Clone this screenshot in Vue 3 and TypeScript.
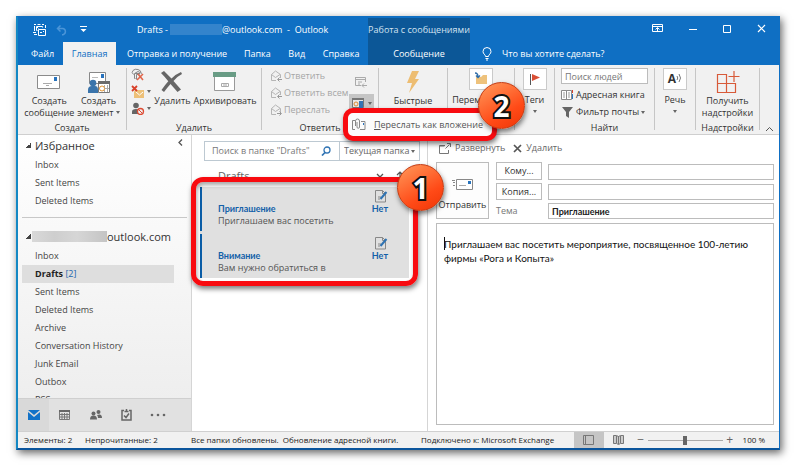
<script setup lang="ts">
import { ref } from 'vue'

interface Tab {
  label: string
  active?: boolean
}
interface Message {
  subject: string
  preview: string
}

const tabs: Tab[] = [
  { label: 'Файл' },
  { label: 'Главная', active: true },
  { label: 'Отправка и получение' },
  { label: 'Папка' },
  { label: 'Вид' },
  { label: 'Справка' },
]
const favorites: string[] = ['Inbox', 'Sent Items', 'Deleted Items']
const folders: string[] = [
  'Inbox', 'Drafts', 'Sent Items', 'Deleted Items', 'Archive',
  'Conversation History', 'Junk Email', 'Outbox', 'RSS-каналы',
]
const messages: Message[] = [
  { subject: 'Приглашение', preview: 'Приглашаем вас посетить' },
  { subject: 'Внимание', preview: 'Вам нужно обратиться в' },
]
const replies: string[] = ['Ответить', 'Ответить всем', 'Переслать']

const peopleQuery = ref('')
const folderQuery = ref('')
const scope = ref('Текущая папка')
const to = ref('')
const cc = ref('')
const subject = ref('Приглашение')
const body = ref('Приглашаем вас посетить мероприятие, посвященное 100-летию фирмы «Рога и Копыта»')
const zoom = ref(100)
</script>

<template>
  <div class="page">
    <div class="window">
      <header class="header">
        <div class="header-main">
          <div class="title-row">
            <div class="quick">
              <button class="bare" aria-label="Отправить и получить">
                <svg width="14" height="14" viewBox="0 0 14 14" fill="none" stroke="#fff">
                  <path d="M1 1.500h2M4.500 1.500h3M9 1.500h2M1.500 3v5M3.500 3.500h6v1M3.500 3.500v4h1M5.500 5.500L4 4M12.500 2v3M5.500 6.500h7v6h-7zM7 9.500h2M10 8.500h1M0 9.500h3M1 11.500h3" />
                </svg>
              </button>
              <button class="bare undo" aria-label="Отменить">
                <svg width="12" height="12" viewBox="0 0 12 12" fill="none" stroke="#4b95d8" stroke-width="1.500">
                  <path d="M4.500 1.500L1.500 4.500l3 3M1.500 4.500H7a3.200 3.200 0 0 1 0 6.200H6" />
                </svg>
              </button>
              <button class="bare" aria-label="Настройка панели">
                <svg width="7" height="7" viewBox="0 0 7 7" fill="#fff"><path d="M0 0h7v1H0zM.5 3h6L3.500 6z" /></svg>
              </button>
            </div>
            <div class="title"><span>Drafts -</span><i class="mask"></i><span>@outlook.com&nbsp; -&nbsp; Outlook</span></div>
          </div>
          <nav class="tabs">
            <button v-for="t in tabs" :key="t.label" class="tab" :class="{ active: t.active }">{{ t.label }}</button>
          </nav>
        </div>
        <div class="context">
          <div class="context-title">Работа с сообщениями</div>
          <button class="tab">Сообщение</button>
        </div>
        <div class="header-side">
          <div class="controls">
            <button class="bare" aria-label="Параметры ленты">
              <svg width="11" height="9" viewBox="0 0 11 9" fill="none" stroke="#fff"><path d="M.5.5h10v7H.5zM.5 2.500h10M5.500 7V4M3.500 5.500l2-2 2 2" /></svg>
            </button>
            <button class="bare" aria-label="Свернуть">
              <svg width="8" height="9" viewBox="0 0 8 9" stroke="#fff"><path d="M0 5.500h8" /></svg>
            </button>
            <button class="bare" aria-label="Развернуть окно">
              <svg width="8" height="9" viewBox="0 0 8 9" fill="none" stroke="#fff"><path d="M.5 1.500h7v7h-7z" /></svg>
            </button>
            <button class="bare" aria-label="Закрыть">
              <svg width="9" height="9" viewBox="0 0 9 9" stroke="#fff" stroke-width="1.200"><path d="M1 1l7 7M8 1L1 8" /></svg>
            </button>
          </div>
          <button class="tell">
            <svg width="10" height="14" viewBox="0 0 10 14" fill="none" stroke="#fff"><path d="M3.500 9.500C3.500 7.500 1 7 1 4.500a4 4 0 0 1 8 0C9 7 6.500 7.500 6.500 9.500zM3.500 11.500h3M4 13h2" /></svg>
            Что вы хотите сделать?
          </button>
        </div>
      </header>

      <section class="ribbon">
        <div class="group create">
          <div class="tools">
            <button class="big">
              <span class="pic"><svg width="24" height="16" viewBox="0 0 24 16"><path d="M.5 1.500h22v13H.5z" fill="#fff" stroke="#8b8b8b" /><path d="M17 3h3v4h-3z" fill="#2873bd" /><path d="M6 9.500h9M9 11.500h3" stroke="#aaa" /></svg></span>
              <span>Создать<br />сообщение</span>
            </button>
            <button class="big">
              <span class="pic"><svg width="24" height="24" viewBox="0 0 24 24"><path d="M2.500 2.500h16v11h-16z" fill="#fff" stroke="#888" /><path d="M14 4h3v4h-3z" fill="#2873bd" /><path d="M5 7.500h6" stroke="#bbb" /><circle cx="6" cy="13" r="3.300" fill="#3a74ab" /><path d="M1 23v-3q0-4 4-4h3q3 0 3 4v3z" fill="#3a74ab" /><path d="M11.500 12.500h11v10h-11z" fill="#fff" stroke="#777" /><path d="M11 11h12v3H11z" fill="#6b6b6b" /><path d="M12 18.500h10M17.500 15v7M20.500 15v7" stroke="#aaa" /><circle cx="15" cy="18.500" r="2.500" fill="#fff" stroke="#e39534" /></svg></span>
              <span>Создать<br />элемент <b class="caret"></b></span>
            </button>
          </div>
          <div class="group-name">Создать</div>
        </div>

        <div class="group delete">
          <div class="tools">
            <div class="mini">
              <button class="bare" aria-label="Игнорировать"><svg width="14" height="13" viewBox="0 0 14 13" fill="none" stroke="#888"><path d="M2.500 6.500Q0 4.500 2 2.500 4 .5 7 1.500t3 3M4.500 10.500H3.500v-5L7 3.500l4 2M4 5.500h5" /><path d="M5.500 11.500v-5h3" /><path d="M7 6l5 6M12 6l-6 6" stroke="#e0664c" stroke-width="1.600" /></svg></button>
              <button class="bare" aria-label="Очистить"><svg width="14" height="13" viewBox="0 0 14 13"><path d="M4 5h9v8H3V7z" fill="#edc078" /><path d="M5 7l3.500 3L12 7" fill="none" stroke="#fff" /><path d="M1 1l5 5M6 1L1 6" stroke="#d8402a" stroke-width="1.800" /></svg><b class="caret"></b></button>
              <button class="bare" aria-label="Нежелательная почта"><svg width="14" height="13" viewBox="0 0 14 13"><circle cx="5" cy="3.500" r="2.800" fill="#666" /><path d="M1 12V9.500Q1 7 5 7t4 2v3z" fill="#666" /><circle cx="9.500" cy="9.500" r="3" fill="#f1f1f1" stroke="#dc4a32" stroke-width="1.300" /><path d="M7.500 7.500l4 4" stroke="#dc4a32" /></svg><b class="caret"></b></button>
            </div>
            <button class="big">
              <span class="pic"><svg width="22" height="22" viewBox="0 0 22 22" fill="#666"><path d="M0 2l3-2q4 4 7.500 7.500Q15 3 20 1l1 2q-5 2.500-8.500 7Q16 14 20 18.500L16.500 21 9.500 13Q6 17 3 21l-2.500-2Q4 14 7.300 10.300 4 6 0 2z" /></svg></span>
              <span>Удалить</span>
            </button>
            <button class="big">
              <span class="pic"><svg width="24" height="20" viewBox="0 0 24 20"><path d="M1.500 4.500h20v14h-20z" fill="#fff" stroke="#999" /><path d="M0 0h23v5H0z" fill="#699c85" /><path d="M8.500 11.500h7v3h-7zM10 13h4" fill="none" stroke="#aaa" /></svg></span>
              <span>Архивировать</span>
            </button>
          </div>
          <div class="group-name">Удалить</div>
        </div>

        <div class="group reply">
          <div class="tools">
            <div class="rows">
              <button v-for="(r, i) in replies" :key="r" class="row muted" disabled>
                <svg width="12" height="12" viewBox="0 0 12 12" fill="none" stroke="#b5b5b5"><path d="M6 10.500H1.500v-6L5.500 1l5 3.500V8M1.500 4.500l4 3 4.500-3" /><path v-if="i === 2" d="M7 9.500h4M9.500 7.500l2 2-2 2" stroke="#999" /><path v-else d="M8 9.500h4M9.500 7.500l-2 2 2 2" stroke="#999" /></svg>
                {{ r }}
              </button>
            </div>
            <div class="reply-extra">
              <button class="bare" disabled aria-label="Собрание"><svg width="13" height="12" viewBox="0 0 13 12" fill="none" stroke="#aaa"><path d="M.5 1.500h10V6M.5 1v8.500H6M.5 3.500h10M3 6h4M3 8h2M7 9.500h5M9 7.500l-2 2 2 2" /></svg></button>
              <button class="bare more" aria-label="Дополнительно"><svg width="13" height="12" viewBox="0 0 13 12"><path d="M.5 1.500h11v9H.5z" fill="#e8e8e8" stroke="#777" /><path d="M0 1h12v2H0z" fill="#777" /><circle cx="4" cy="7" r="2" fill="none" stroke="#df8d34" /><path d="M7 4h4v7H7z" fill="#3474b4" /></svg><b class="caret"></b></button>
            </div>
          </div>
          <div class="group-name">Ответить</div>
        </div>

        <div class="group steps">
          <div class="tools">
            <button class="big">
              <span class="pic"><svg width="14" height="24" viewBox="0 0 14 24" fill="#edbd72"><path d="M6 1h7L9 9h4L3 23l3-10H1z" /></svg></span>
              <span>Быстрые<br />действия <b class="caret"></b></span>
            </button>
          </div>
        </div>

        <div class="group move">
          <div class="tools">
            <button class="big">
              <span class="pic framed"><svg width="14" height="14" viewBox="0 0 14 14"><path d="M2 5h5l2-2h4v9H2z" fill="#eec27c" /><path d="M1 1q3 0 3 4M2 3.500l2 2 2-2" fill="none" stroke="#2e6ca8" stroke-width="1.300" /></svg></span>
              <span>Переместить<br /><b class="caret"></b></span>
            </button>
          </div>
        </div>

        <div class="group tags">
          <div class="tools">
            <button class="big">
              <span class="pic framed"><svg width="11" height="13" viewBox="0 0 11 13"><path d="M1.500 1v11" stroke="#555" /><path d="M3 1l8 3.500L3 8z" fill="#d94f35" /></svg></span>
              <span>Теги<br /><b class="caret"></b></span>
            </button>
          </div>
        </div>

        <div class="group find">
          <div class="tools">
            <div class="rows">
              <input v-model="peopleQuery" class="people" placeholder="Поиск людей" aria-label="Поиск людей" />
              <button class="row"><svg width="13" height="12" viewBox="0 0 13 12"><path d="M.5 1.500h5v9h-5zM5.500 1.500h5v9h-5z" fill="#fff" stroke="#8b8b8b" /><path d="M2 4h2M2 6h2M2 8h2M7 4h2M7 6h2M7 8h2" stroke="#999" /><path d="M11 1h1v3h-1z" fill="#d8402a" /><path d="M11 5h1v5h-1z" fill="#2873bd" /></svg>Адресная книга</button>
              <button class="row"><svg width="13" height="12" viewBox="0 0 13 12" fill="#666"><path d="M1 1h11L8 6v6l-3-2V6z" /></svg>Фильтр почты <b class="caret"></b></button>
            </div>
          </div>
          <div class="group-name">Найти</div>
        </div>

        <div class="group speech">
          <div class="tools">
            <button class="big">
              <span class="pic framed"><span class="glyph">A</span><svg width="6" height="10" viewBox="0 0 6 10" fill="none" stroke="#777"><path d="M1 2q1.500 2 0 4M3 0q3 4 0 8" /></svg></span>
              <span>Речь<br /><b class="caret"></b></span>
            </button>
          </div>
        </div>

        <div class="group addins">
          <div class="tools">
            <button class="big">
              <span class="pic"><svg width="24" height="24" viewBox="0 0 24 24" fill="none" stroke="#d85a39" stroke-width="1.200"><path d="M1.500 4.500h9v18h-9zM1.500 13.500h18v9h-18zM18 1v11M12.500 6.500h11" /></svg></span>
              <span>Получить<br />надстройки</span>
            </button>
          </div>
          <div class="group-name">Надстройки</div>
        </div>
        <button class="bare collapse" aria-label="Свернуть ленту"><svg width="9" height="6" viewBox="0 0 9 6" fill="none" stroke="#555"><path d="M1 5l3.500-3.500L8 5" /></svg></button>

        <div class="menu" role="menu">
          <button class="menu-item" role="menuitem">
            <svg width="14" height="13" viewBox="0 0 14 13" fill="none" stroke="#888"><path d="M3 2.500H.5v9H3M8 11.500h5v-8H9" /><path d="M3.500 8V3a1.500 1.500 0 0 1 4 0v6a1 1 0 0 1-2.500 0V4" /><path d="M11 5h1v2h-1z" fill="#2873bd" stroke="none" /></svg>
            <span><u>П</u>ереслать как вложение</span>
          </button>
          <span class="badge two">2</span>
        </div>
      </section>

      <main class="work">
        <aside class="sidebar">
          <div class="folders">
            <h2><i class="tri"></i>Избранное
              <button class="bare fold" aria-label="Свернуть область папок"><svg width="5" height="7" viewBox="0 0 5 7" fill="none" stroke="#555" stroke-width="1.300"><path d="M4 .5l-3 3 3 3" /></svg></button>
            </h2>
            <a v-for="f in favorites" :key="f" href="#" class="folder">{{ f }}</a>
            <hr />
            <h2 class="account"><i class="tri"></i><i class="blur"></i>outlook.com</h2>
            <a v-for="f in folders" :key="f" href="#" class="folder" :class="{ current: f === 'Drafts' }">{{ f }}<span v-if="f === 'Drafts'"> [2]</span></a>
          </div>
          <nav class="modules">
            <button class="bare on" aria-label="Почта"><svg width="12" height="10" viewBox="0 0 12 10" fill="#1272c8"><path d="M0 0h12L6 5z" /><path d="M0 2l6 5 6-5v8H0z" /></svg></button>
            <button class="bare" aria-label="Календарь"><svg width="11" height="10" viewBox="0 0 11 10"><path d="M0 0h11v2H0z" fill="#666" /><path d="M.5 2v7.500h10V2M0 4.500h11M0 7h11M3 3v7M5.500 3v7M8 3v7" fill="none" stroke="#777" /></svg></button>
            <button class="bare" aria-label="Люди"><svg width="12" height="10" viewBox="0 0 12 10" fill="#666"><circle cx="3.500" cy="3.500" r="2" /><circle cx="8.500" cy="2" r="2" /><path d="M0 9.500q0-4 3.500-4T7 9.500zM7 5q5-2 5 3H8Q8 6 7 5z" /></svg></button>
            <button class="bare" aria-label="Задачи"><svg width="11" height="12" viewBox="0 0 11 12" fill="none" stroke="#666" stroke-width="1.500"><path d="M3 1.500H1v9.500h9V1.500H8M3.500 2.500h4M5.500 0v2M3 6.500l2 2 3-4" /></svg></button>
            <button class="bare" aria-label="Ещё"><svg width="16" height="4" viewBox="0 0 16 4" fill="#666"><circle cx="2" cy="2" r="1.300" /><circle cx="8" cy="2" r="1.300" /><circle cx="14" cy="2" r="1.300" /></svg></button>
          </nav>
        </aside>

        <section class="list-pane">
          <div class="search">
            <input v-model="folderQuery" placeholder="Поиск в папке &quot;Drafts&quot;" aria-label="Поиск в папке" />
            <svg width="10" height="10" viewBox="0 0 10 10" fill="none" stroke="#2f73b3" stroke-width="1.300"><circle cx="6" cy="4" r="3" /><path d="M4 6.500L1 9.500" stroke-width="1.700" /></svg>
            <label class="scope">
              <select v-model="scope" aria-label="Область поиска"><option>Текущая папка</option></select>
              <b class="caret"></b>
            </label>
          </div>
          <div class="list-head">
            <span>Drafts</span>
            <svg width="8" height="6" viewBox="0 0 8 6" fill="none" stroke="#555" stroke-width="1.300"><path d="M1 1l3 3 3-3" /></svg>
            <svg width="8" height="10" viewBox="0 0 8 10" fill="none" stroke="#555" stroke-width="1.200"><path d="M4 10V1M1 4l3-3 3 3" /></svg>
          </div>
          <div class="messages">
            <button v-for="m in messages" :key="m.subject" class="message">
              <svg class="note" width="13" height="13" viewBox="0 0 13 13" fill="none"><path d="M.5 .500h7l3 3v8.500H.5zM7.500.500v3h3M3 7h3M3 9h2" stroke="#888" /><path d="M5.500 9l6-7" stroke="#2f73b3" stroke-width="2" /></svg>
              <span class="line"><strong>{{ m.subject }}</strong><strong>Нет</strong></span>
              <span class="preview">{{ m.preview }}</span>
            </button>
            <span class="frame"></span>
            <span class="badge one">1</span>
          </div>
        </section>

        <section class="editor">
          <div class="editor-bar">
            <button class="row"><svg width="12" height="11" viewBox="0 0 12 11" fill="none" stroke="#777"><path d="M6 2.500H.5v8h9V7M.5 3h5M6.500 5.500l4-4M8 .500h3.500V4" /></svg>Развернуть</button>
            <button class="row"><svg width="9" height="9" viewBox="0 0 9 9" stroke="#555" stroke-width="1.700"><path d="M1 1l7 7M8 1L1 8" /></svg>Удалить</button>
          </div>
          <div class="compose">
            <button class="send">
              <svg width="22" height="12" viewBox="0 0 22 12"><path d="M4.500.5h16v10h-16z" fill="#fff" stroke="#888" /><path d="M16 2h3v3h-3z" fill="#2873bd" /><path d="M7 6.500h7" stroke="#aaa" /><path d="M0 1.500h3M1 3.500h2M1 6.500h2" stroke="#888" /></svg>
              Отправить
            </button>
            <div class="fields">
              <button class="pick">Кому...</button><input v-model="to" aria-label="Кому" />
              <button class="pick">Копия...</button><input v-model="cc" aria-label="Копия" />
              <label for="subject">Тема</label><input id="subject" v-model="subject" class="subject" />
            </div>
          </div>
          <div class="body"><i class="cursor"></i><textarea v-model="body" aria-label="Текст сообщения" spellcheck="false"></textarea></div>
        </section>
      </main>

      <footer class="status">
        <span class="count">Элементы: 2</span>
        <span class="unread">Непрочитанные: 2</span>
        <span class="sync">Все папки обновлены.&nbsp; Обновление адресной книги.</span>
        <span class="link">Подключено к: Microsoft Exchange</span>
        <button class="bare view on" aria-label="Обычный"><svg width="12" height="10" viewBox="0 0 12 10" fill="none" stroke="#777"><path d="M.5.500h10v9H.5zM2.500.500v9" /></svg></button>
        <button class="bare view" aria-label="Чтение"><svg width="11" height="10" viewBox="0 0 11 10" fill="#ccc" stroke="#777"><path d="M.5.500h3l2 1 2-1h3v8h-3l-2 1-2-1h-3zM5.500 1v8M3.500 1v7M7.500 1v7" /></svg></button>
        <button class="bare step" aria-label="Уменьшить">−</button>
        <input v-model="zoom" type="range" min="0" max="200" aria-label="Масштаб" />
        <button class="bare step" aria-label="Увеличить">+</button>
        <span class="percent">{{ zoom }} %</span>
      </footer>
    </div>
  </div>
</template>

<style>
body {
  background: #fff;
}
</style>

<style scoped>
* {
  box-sizing: border-box;
}
.page {
  display: flex;
  height: 100vh;
  min-height: 440px;
  padding: 16px;
  font: 9px/12px "Open Sans", "Noto Sans", sans-serif;
  color: #333;
}
.window {
  flex: 1;
  min-width: 0;
  display: flex;
  flex-direction: column;
  background: #fff;
  border: solid #0f6fc3;
  border-width: 1px 1px 2px 2px;
  border-bottom-color: #0b559c;
  border-left-color: #1488c4;
  box-shadow: 2px 3px 8px rgba(0, 0, 0, 0.6);
}
button, input, select, textarea {
  font: inherit;
  color: inherit;
  margin: 0;
  padding: 0;
  border: 0;
  border-radius: 0;
  background: none;
  min-width: 0;
  outline: 0;
}
button {
  white-space: nowrap;
}
svg {
  display: block;
  flex: none;
}
.bare {
  display: flex;
  align-items: center;
  justify-content: center;
}
.caret {
  display: inline-block;
  flex: none;
  border: solid transparent;
  border-width: 3px 2px 0;
  border-top-color: #666;
  vertical-align: 2px;
}

/* header */
.header {
  display: flex;
  height: 48px;
  flex: none;
  background: #0f6fc3;
  color: #fff;
}
.header-main {
  width: 350px;
  flex: none;
  display: flex;
  flex-direction: column;
}
.title-row {
  display: flex;
  align-items: center;
  height: 25px;
}
.quick {
  display: flex;
  align-items: center;
  width: 119px;
  padding-left: 15px;
}
.undo {
  margin: 0 12px 0 9px;
}
.title {
  display: flex;
  align-items: center;
  white-space: nowrap;
}
.mask {
  width: 52px;
  height: 11px;
  margin-left: 2px;
  background: #3484cc;
}
.tabs {
  display: flex;
  flex: 1;
  padding-left: 4px;
}
.tab {
  padding: 0 9px;
}
.tab.active {
  background: #f1f1f1;
  color: #0f6fc3;
}
.tab.active + .tab {
  padding-left: 11px;
}
.context {
  width: 102px;
  flex: none;
  display: flex;
  flex-direction: column;
  align-items: center;
  margin-top: 1px;
  background: #0c5797;
  white-space: nowrap;
}
.context-title {
  line-height: 24px;
  color: #d3e3f1;
}
.context .tab {
  flex: 1;
}
.header-side {
  flex: 1;
  display: flex;
  flex-direction: column;
}
.controls {
  display: flex;
  align-items: center;
  justify-content: flex-end;
  height: 22px;
  gap: 26px;
  padding-right: 13px;
}
.tell {
  display: flex;
  align-items: center;
  gap: 10px;
  flex: 1;
  padding: 3px 0 0 12px;
}

/* ribbon */
.ribbon {
  position: relative;
  z-index: 2;
  display: flex;
  height: 70px;
  flex: none;
  padding: 3px 0 1px;
  background: #f1f1f1;
  border-bottom: 1px solid #cfcfcf;
}
.group {
  display: flex;
  flex-direction: column;
  justify-content: space-between;
  flex: none;
  height: 62px;
  border-right: 1px solid #c6c6c6;
}
.tools {
  display: flex;
  justify-content: center;
}
.group-name {
  height: 12px;
  margin-bottom: -4px;
  text-align: center;
  line-height: 12px;
}
.create { width: 109px; }
.create .tools { gap: 3px; }
.delete { width: 135px; }
.delete .tools { gap: 3px; }
.reply { width: 117px; }
.steps { width: 69px; }
.move { width: 67px; }
.tags { width: 40px; }
.find { width: 100px; }
.speech { width: 41px; }
.addins { width: 64px; }
.big {
  display: flex;
  flex-direction: column;
  align-items: center;
  line-height: 12px;
}
.pic {
  display: flex;
  align-items: center;
  justify-content: center;
  height: 27px;
}
.pic.framed {
  width: 24px;
  height: 22px;
  margin: 0 0 4px;
  background: #fff;
  border: 1px solid #cacaca;
}
.glyph {
  font-size: 12px;
  font-weight: 700;
}
.mini {
  display: flex;
  flex-direction: column;
  align-items: flex-start;
  gap: 4px;
}
.mini .bare {
  gap: 2px;
}
.rows {
  display: flex;
  flex-direction: column;
  gap: 5px;
  align-items: flex-start;
}
.row {
  display: flex;
  align-items: center;
  gap: 2px;
}
.reply .tools {
  justify-content: space-between;
  padding: 2px 4px 0 8px;
}
.muted {
  color: #a6a6a6;
}
.reply-extra {
  display: flex;
  flex-direction: column;
  gap: 6px;
  padding-top: 6px;
}
.more {
  gap: 3px;
  width: 25px;
  height: 18px;
  background: #c5c5c5;
}
.people {
  width: 87px;
  height: 16px;
  padding: 0 3px;
  background: #fff;
  border: 1px solid #bcbcbc;
}
input::placeholder {
  color: #777;
  opacity: 1;
}
.collapse {
  flex: 1;
  align-self: flex-end;
  height: 8px;
}
.menu {
  position: absolute;
  left: 325px;
  top: 43px;
  width: 154px;
  height: 33px;
  background: #fbfbfb;
  border: 5px solid #f80b10;
  border-radius: 10px;
  box-shadow: 1px 3px 5px rgba(0, 0, 0, 0.5);
}
.menu-item {
  display: flex;
  align-items: center;
  gap: 8px;
  height: 100%;
  padding-left: 4px;
  color: #555;
}
.badge {
  position: absolute;
  display: flex;
  align-items: center;
  justify-content: center;
  width: 47px;
  height: 47px;
  border: 1px solid #c33a12;
  border-radius: 50%;
  background: linear-gradient(150deg, #ff9a5c, #ff4a17 65%, #ef3606);
  box-shadow: 1px 3px 5px rgba(0, 0, 0, 0.5);
  color: #fff;
  font-size: 28px;
  line-height: 28px;
  font-weight: 700;
  -webkit-text-stroke: 4px #111;
  paint-order: stroke fill;
}
.two {
  right: -33px;
  top: -31px;
}
.one {
  right: -35px;
  top: -23px;
}

/* folders */
.work {
  display: flex;
  flex: 1;
  min-height: 0;
}
.sidebar {
  display: flex;
  flex-direction: column;
  width: 174px;
  flex: none;
  border-right: 1px solid #d5d5d5;
  background: linear-gradient(#fff, #ececec);
}
.folders {
  flex: 1;
  min-height: 0;
  overflow: hidden;
  padding: 0 4px;
}
h2 {
  display: flex;
  align-items: center;
  height: 21px;
  margin: 0;
  padding-left: 4px;
  font-size: 11px;
  font-weight: 400;
  color: #333;
}
.tri {
  width: 5px;
  height: 5px;
  margin-right: 4px;
  background: linear-gradient(135deg, transparent 50%, #444 50%);
}
.fold {
  margin: -6px 4px 0 auto;
}
.folder {
  display: block;
  height: 18px;
  margin-right: 13px;
  padding-left: 13px;
  line-height: 18px;
  color: #444;
  text-decoration: none;
}
.current {
  background: #dedede;
  font-weight: 700;
  color: #222;
}
.current span {
  font-weight: 400;
  color: #1a66ad;
}
hr {
  height: 1px;
  margin: 7px 0 8px;
  border: 0;
  background: #c8c8c8;
}
.account .tri {
  margin-right: 1px;
}
.blur {
  width: 75px;
  height: 11px;
  background: linear-gradient(90deg, #d9d9d9, #cecece 30%, #d6d6d6 60%, #c4c4c4);
}
.modules {
  display: flex;
  height: 33px;
  flex: none;
  border-top: 1px solid #cfcfcf;
  background: #e1e1e1;
}
.modules .bare {
  width: 31px;
}
.modules .on {
  background: #d9d9d9;
}

/* message list */
.list-pane {
  width: 236px;
  flex: none;
  padding: 6px 7px 0 8px;
  border-right: 1px solid #d5d5d5;
}
.search {
  display: flex;
  align-items: center;
  height: 20px;
  margin-left: 4px;
  border: 1px solid #bdc9d2;
}
.search input {
  flex: 1;
  padding-left: 7px;
}
.scope {
  display: flex;
  align-items: center;
  height: 100%;
  width: 80px;
  margin-left: 8px;
  padding: 0 4px;
  border-left: 1px solid #bdc9d2;
  color: #666;
}
.scope select {
  flex: 1;
  appearance: none;
}
.list-head {
  display: flex;
  align-items: center;
  gap: 12px;
  height: 26px;
  padding: 4px 16px 0 18px;
  font-size: 11px;
  color: #666;
}
.list-head span {
  flex: 1;
}
.messages {
  position: relative;
  display: flex;
  flex-direction: column;
  gap: 3px;
  width: 209px;
  background: #e0e0e0;
}
.message {
  display: flex;
  flex-direction: column;
  height: 44px;
  padding: 3px 21px 0 16px;
  border-left: 2px solid #0b5ea8;
  background: #e0e0e0;
  text-align: left;
}
.note {
  align-self: flex-end;
}
.line {
  display: flex;
  justify-content: space-between;
  font-family: Lato, "Open Sans", sans-serif;
  color: #1360a9;
}
.preview {
  line-height: 11px;
  color: #555;
}
.frame {
  position: absolute;
  inset: -10px -9px -8px -9px;
  border: 5px solid #f80b10;
  border-radius: 12px;
  box-shadow: 1px 3px 5px rgba(0, 0, 0, 0.5), inset 1px 3px 4px rgba(0, 0, 0, 0.35);
}

/* editor */
.editor {
  flex: 1;
  min-width: 0;
  display: flex;
  flex-direction: column;
  padding: 5px 5px 6px 8px;
}
.editor-bar {
  display: flex;
  gap: 8px;
  height: 22px;
  padding: 0 0 6px 3px;
  color: #666;
}
.editor-bar .row {
  gap: 4px;
}
.compose {
  display: flex;
  gap: 7px;
  height: 57px;
  flex: none;
}
.send {
  display: flex;
  flex-direction: column;
  align-items: center;
  gap: 8px;
  width: 53px;
  padding-top: 16px;
  background: #fdfdfd;
  border: 1px solid #bcbcbc;
}
.fields {
  flex: 1;
  min-width: 0;
  display: grid;
  grid-template-columns: 46px 1fr;
  grid-template-rows: 18px 17px 16px;
  gap: 3px 6px;
  align-items: center;
}
.fields input {
  align-self: end;
  height: 16px;
  padding: 0 3px;
  border: 1px solid #bcbcbc;
}
.pick {
  height: 100%;
  border: 1px solid #bcbcbc;
}
.fields label {
  color: #777;
}
.fields .subject {
  font-family: Lato, "Open Sans", sans-serif;
  font-weight: 700;
  color: #222;
}
.body {
  position: relative;
  display: flex;
  flex: 1;
  min-height: 0;
  margin-top: 4px;
  border: 1px solid #bcbcbc;
}
.body textarea {
  flex: 1;
  padding: 13px 16px 0 7px;
  resize: none;
  font: 10px/14px Lato, "Open Sans", sans-serif;
  color: #111;
}
.cursor {
  position: absolute;
  left: 7px;
  top: 13px;
  width: 1px;
  height: 13px;
  background: #111;
}

/* status bar */
.status {
  display: flex;
  align-items: center;
  height: 17px;
  flex: none;
  padding: 0 14px 0 6px;
  background: #f1f1f1;
  border-top: 1px solid #d0d0d0;
  font-size: 8px;
  color: #222;
  white-space: nowrap;
}
.count { width: 61px; }
.unread { width: 106px; }
.sync { width: 230px; }
.link { flex: 1; }
.view {
  width: 30px;
  height: 16px;
}
.view.on {
  height: 100%;
  background: #c5c5c5;
}
.step {
  width: 14px;
  font-size: 12px;
  color: #666;
}
input[type="range"] {
  appearance: none;
  width: 75px;
  height: 10px;
  background: linear-gradient(#aaa, #aaa) center / 100% 1px no-repeat;
}
input[type="range"]::-webkit-slider-thumb {
  appearance: none;
  width: 4px;
  height: 9px;
  background: #666;
}
.percent {
  margin-left: 6px;
}
</style>
